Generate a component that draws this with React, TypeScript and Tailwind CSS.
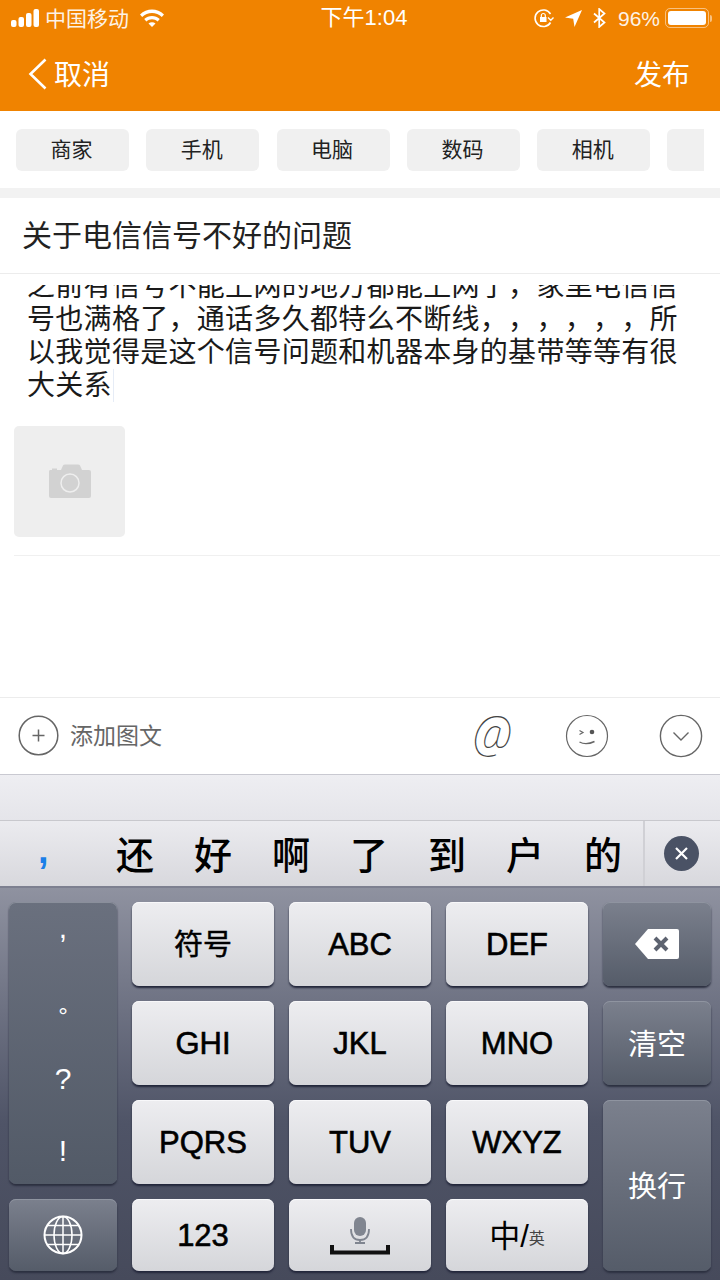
const cjk = "font-['Liberation_Sans','Noto_Sans_CJK_SC',sans-serif]";

const tabs = ['商家', '手机', '电脑', '数码', '相机'];
const candidates = ['还', '好', '啊', '了', '到', '户', '的'];

function StatusBar() {
  return (
    <div className="flex h-[36px] items-center pl-[11px] pr-[8px] text-white">
      <svg width="28" height="18" viewBox="0 0 28 18" fill="white">
        <rect x="0" y="11" width="5.5" height="7" rx="2" />
        <rect x="7.5" y="8" width="5.5" height="10" rx="2" />
        <rect x="15" y="4" width="5.5" height="14" rx="2" />
        <rect x="22.5" y="0" width="5.5" height="18" rx="2" />
      </svg>
      <span className="ml-[6px] w-[95px] text-[21px] leading-none opacity-90">中国移动</span>
      <svg width="24" height="18" viewBox="0 0 24 18" fill="white">
        <path d="M0 5.5C6.5-1.2 17.500-1.200 24 5.500L21.800 7.900C16.400 2.600 7.600 2.600 2.200 7.900Z" />
        <path d="M4.200 10.100C8.500 6 15.500 6 19.800 10.100L17.600 12.400C14.400 9.500 9.600 9.500 6.400 12.400Z" />
        <path d="M8.500 14.500C10.500 12.800 13.500 12.800 15.500 14.500L12 18Z" />
      </svg>
      <span className="flex-1 pl-[31px] text-center text-[22px] leading-none">下午1:04</span>
      <svg width="21" height="21" viewBox="0 0 21 21" fill="none" stroke="white" strokeWidth="1.600">
        <path d="M17.500 14.500A8.300 8.300 0 1 1 17.500 6" />
        <path d="M20.500 9.500L17.800 12.200L15 9.500" strokeWidth="1.400" />
        <rect x="7" y="9" width="6.500" height="5" fill="white" stroke="none" />
        <path d="M8.300 9V7.500A2 2 0 0 1 12.300 7.500V9" strokeWidth="1.200" />
      </svg>
      <svg className="ml-[11px]" width="17" height="17" viewBox="0 0 17 17" fill="white">
        <path d="M17 0L9.500 17L8.200 8.800L0 7.500Z" />
      </svg>
      <svg className="ml-[11px]" width="13" height="20" viewBox="0 0 13 20" fill="none" stroke="white" strokeWidth="1.700">
        <path d="M1 5.500L11.500 14.500L6.200 19V1L11.500 5.500L1 14.500" />
      </svg>
      <span className="ml-[12px] text-[21px] leading-none opacity-90">96%</span>
      <div className="ml-[5px] flex items-center">
        <div className="flex h-[20px] w-[44px] rounded-[5px] border border-white/50 p-[2px]">
          <div className="flex-1 rounded-[3px] bg-white" />
        </div>
        <div className="ml-[1px] h-[7px] w-[2px] rounded-r-full bg-white/50" />
      </div>
    </div>
  );
}

function NavBar() {
  return (
    <div className="flex h-[75px] items-center pl-[28px] pr-[30px] text-white">
      <svg width="20" height="32" viewBox="0 0 20 32" fill="none" stroke="white" strokeWidth="2.600">
        <path d="M17.500 1.500L2.500 16L17.500 30.500" />
      </svg>
      <span className="mt-[4px] ml-[6px] flex-1 text-[28px] leading-none">取消</span>
      <span className="mt-[4px] text-[28px] leading-none">发布</span>
    </div>
  );
}

function CameraIcon() {
  return (
    <svg width="44" height="36" viewBox="0 0 44 36">
      <path
        d="M2 6H4V4.500H9V6H13L15 1.500Q15.500 0.500 17 0.500H30Q31.500 0.500 32 1.500L34 6H41Q43 6 43 8V32Q43 34 41 34H3Q1 34 1 32V8Q1 6 2 6Z"
        fill="#d2d2d2"
      />
      <circle cx="22" cy="19" r="9" fill="none" stroke="#eeeeee" strokeWidth="1.500" />
    </svg>
  );
}

function SmileIcon() {
  return (
    <svg width="44" height="44" viewBox="0 0 44 44" fill="none" stroke="#666" strokeWidth="1.200">
      <circle cx="22" cy="22" r="20.500" />
      <path d="M14.500 16.500L18 18.500L14.500 20.500" />
      <circle cx="27" cy="18" r="2.300" fill="#555" stroke="none" />
      <path d="M14.500 28Q21 31.500 29.500 27.500" strokeWidth="1.400" />
    </svg>
  );
}

function Toolbar() {
  return (
    <div className="flex h-[77px] shrink-0 items-center border-t border-[#ececec] bg-white pb-[1px] text-[#666]">
      <svg className="ml-[18px]" width="41" height="41" viewBox="0 0 41 41" fill="none" stroke="#666" strokeWidth="1.500">
        <circle cx="20.500" cy="20.500" r="19.300" />
        <path d="M14.500 20.500H26.500M20.500 14.500V26.500" />
      </svg>
      <span className="mt-[2px] ml-[11px] flex-1 text-[23px] leading-none">添加图文</span>
      <span className="mr-[50px] mb-[6px] w-[44px] text-center font-['Roboto',sans-serif] text-[44px] leading-none font-thin italic text-[#444]">
        @
      </span>
      <SmileIcon />
      <svg className="ml-[50px] mr-[17px]" width="44" height="44" viewBox="0 0 44 44" fill="none" stroke="#666" strokeWidth="1.400">
        <circle cx="22" cy="22" r="20.600" />
        <path d="M14.500 18.500L22 26L29.500 18.500" />
      </svg>
    </div>
  );
}

function CandidateBar() {
  return (
    <div className="shrink-0">
      <div className="h-[46px] border-t border-[#c9c9d1] bg-linear-to-b from-[#eeeef2] to-[#e5e5ea]" />
      <div className="flex h-[68px] items-stretch border-t border-b-2 border-t-[#c8c8cd] border-b-[#7d8090] bg-linear-to-b from-[#ebebef] to-[#d8d8dd]">
        <span className="flex w-[96px] items-center pb-[8px] pl-[38px] text-[38px] leading-none font-bold text-[#1b7fe8]">,</span>
        {candidates.map((c) => (
          <span key={c} className="flex w-[78px] items-center justify-center pt-[5px] text-[38px] leading-none font-medium text-black">
            {c}
          </span>
        ))}
        <div className="ml-[1px] flex flex-1 items-center justify-center border-l-2 border-[#d0d0d5] pr-[2px]">
          <div className="flex h-[35px] w-[35px] items-center justify-center rounded-full bg-[#4a5265]">
            <svg width="15" height="15" viewBox="0 0 15 15" stroke="white" strokeWidth="2.200">
              <path d="M2 2L13 13M13 2L2 13" />
            </svg>
          </div>
        </div>
      </div>
    </div>
  );
}

const lightKey =
  'flex items-center justify-center rounded-[7px] bg-linear-to-b from-[#ededf0] to-[#d5d6da] shadow-[inset_0_1px_0_#f8f8fa,0_2px_2px_#22263a] text-black';
const darkKey =
  'flex items-center justify-center rounded-[7px] bg-linear-to-b from-[#7b808d] to-[#555c69] shadow-[inset_0_1px_0_#8f94a0,0_2px_2px_#2c3040] text-white';
const latin = 'pt-[3px] text-[31px] [-webkit-text-stroke:0.6px_#000]';

function Keyboard() {
  return (
    <div className="grid h-[392px] shrink-0 grid-cols-[108px_142px_142px_142px_108px] grid-rows-[84px_84px_84px_72px] gap-x-[15px] gap-y-[15px] bg-linear-to-b from-[#8f92a0] via-[#4f5467] via-60% to-[#464a5b] pt-[14px] pl-[9px]">
      <div className="row-span-3 flex flex-col items-center rounded-[7px] bg-linear-to-b from-[#6a707e] to-[#525a67] pt-[8px] text-white shadow-[inset_0_1px_0_#8a8f9b,0_2px_2px_#2c3040]">
        <span className="h-[66px] text-[30px] leading-[36px]">,</span>
        <span className="h-[85px] pt-[22px] text-[24px] leading-[36px]">°</span>
        <span className="h-[72px] text-[30px] leading-[36px]">?</span>
        <span className="h-[50px] text-[30px] leading-[36px]">!</span>
      </div>
      <div className={`${lightKey} pt-[4px] text-[29px] [-webkit-text-stroke:0.5px_#000]`}>符号</div>
      <div className={`${lightKey} ${latin}`}>ABC</div>
      <div className={`${lightKey} ${latin}`}>DEF</div>
      <div className={darkKey}>
        <svg width="44" height="30" viewBox="0 0 44 30">
          <path d="M13 0H42Q44 0 44 2V28Q44 30 42 30H13L0 15Z" fill="white" />
          <path d="M20 9L32 21M32 9L20 21" stroke="#5d6370" strokeWidth="4" />
        </svg>
      </div>

      <div className={`${lightKey} ${latin}`}>GHI</div>
      <div className={`${lightKey} ${latin}`}>JKL</div>
      <div className={`${lightKey} ${latin}`}>MNO</div>
      <div className={`${darkKey} pt-[5px] text-[29px]`}>清空</div>

      <div className={`${lightKey} ${latin}`}>PQRS</div>
      <div className={`${lightKey} ${latin}`}>TUV</div>
      <div className={`${lightKey} ${latin}`}>WXYZ</div>
      <div className={`${darkKey} row-span-2 pt-[4px] text-[29px]`}>换行</div>

      <div className={darkKey}>
        <svg width="40" height="40" viewBox="0 0 40 40" fill="none" stroke="white" strokeWidth="1.500">
          <circle cx="20" cy="20" r="18.500" strokeWidth="2" />
          <ellipse cx="20" cy="20" rx="9" ry="18.500" />
          <path d="M20 1.500V38.500M1.500 20H38.500M4.500 10.500H35.500M4.500 29.500H35.500" />
        </svg>
      </div>
      <div className={`${lightKey} ${latin}`}>123</div>
      <div className={`${lightKey} flex-col pt-[2px]`}>
        <svg width="60" height="38" viewBox="0 0 60 38">
          <rect x="24" y="0" width="12" height="19" rx="6" fill="#808590" />
          <path d="M21 12Q21 23 30 23Q39 23 39 12" fill="none" stroke="#808590" strokeWidth="1.800" />
          <path d="M30 23V26M25 26H35" fill="none" stroke="#808590" strokeWidth="1.800" />
          <path d="M2 28V35.500H58V28" fill="none" stroke="#111" strokeWidth="4" />
        </svg>
      </div>
      <div className={`${lightKey} items-center pt-[2px]`}>
        <span className="text-[31px] leading-none">中/</span>
        <span className="mt-[6px] text-[16px] leading-none text-[#444]">英</span>
      </div>
    </div>
  );
}

export default function App() {
  return (
    <div className={`flex h-[1280px] w-[720px] flex-col overflow-hidden bg-white ${cjk}`}>
      <header className="h-[111px] shrink-0 bg-[#f08300]">
        <StatusBar />
        <NavBar />
      </header>

      <div className="h-[77px] shrink-0 pt-[18px] pl-[16px] pr-[16px]">
        <div className="flex gap-[17.300px] overflow-hidden">
          {tabs.map((t) => (
            <div key={t} className="flex h-[42px] w-[113px] shrink-0 items-center justify-center rounded-[6px] bg-[#f0f0f0] pr-[2px] pb-[2px] text-[21px] leading-none text-[#222]">
              {t}
            </div>
          ))}
          <div className="h-[42px] w-[113px] shrink-0 rounded-[6px] bg-[#f0f0f0]" />
        </div>
      </div>

      <div className="h-[10px] shrink-0 bg-[#f2f2f2]" />

      <div className="flex h-[76px] shrink-0 items-center border-b border-[#ececec] pl-[22px] text-[30px] leading-none text-[#222]">
        关于电信信号不好的问题
      </div>

      <div className="h-[11px] shrink-0" />
      <div className="min-h-0 flex-1 overflow-hidden">
        <div className="-mt-[15px] pl-[27px] text-[28px] leading-[33px] tracking-[0.3px] text-[#1a1a1a] [text-spacing-trim:space-all]">
          <div className="whitespace-nowrap">之前有信号不能上网的地方都能上网了，家里电信信</div>
          <div className="whitespace-nowrap">号也满格了，通话多久都特么不断线，，，，，，所</div>
          <div className="whitespace-nowrap">以我觉得是这个信号问题和机器本身的基带等等有很</div>
          <div className="flex items-center whitespace-nowrap">
            大关系
            <span className="ml-[1px] h-[33px] w-[1px] bg-[#e6ecf6]" />
          </div>
        </div>
        <div className="mt-[24px] ml-[14px] flex h-[111px] w-[111px] items-center justify-center rounded-[5px] bg-[#eeeeee]">
          <CameraIcon />
        </div>
        <div className="mt-[18px] ml-[14px] h-[1px] bg-[#f0f0f0]" />
      </div>

      <Toolbar />
      <CandidateBar />
      <Keyboard />
    </div>
  );
}
